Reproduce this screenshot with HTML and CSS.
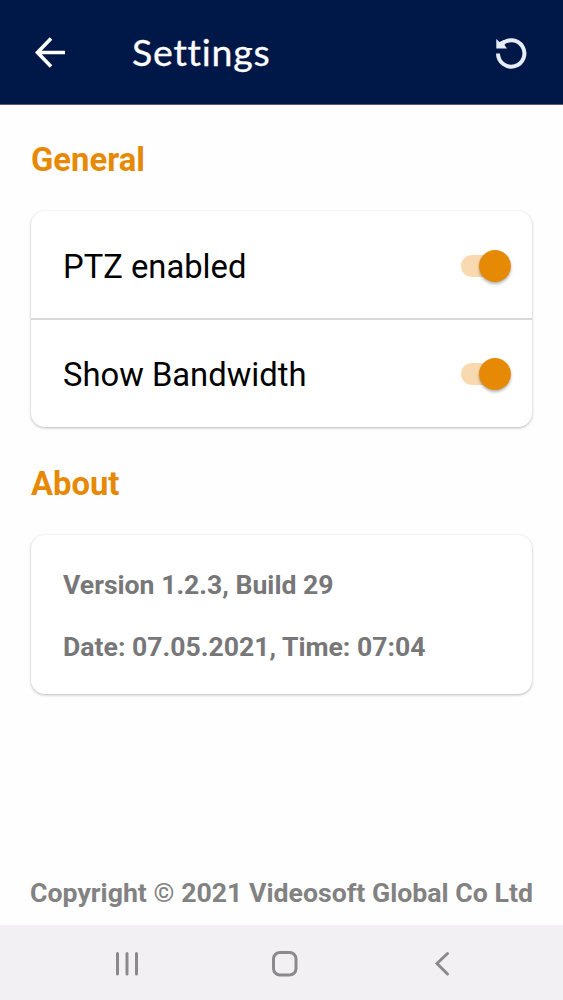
FILE: index.html
```
<!DOCTYPE html>
<html lang="en">
<head>
	<meta charset="utf-8">
	<title>Settings</title>
	<link rel="stylesheet" href="styles.css">
</head>
<body>
	<header class="app-bar">
		<svg class="back" viewBox="0 0 34 34"><path d="M32 17.500H4.500M18 3.500L4.500 17.500L18 31.500"/></svg>
		<h1>Settings</h1>
		<svg class="reset" viewBox="0 0 34 34"><path d="M7.500 9.500A13.200 13.200 0 1 1 4 18.500"/><path class="head" d="M2.300 4L5.500 7L10 5L10.500 10L13 13.500H2.300Z"/></svg>
	</header>
	<main>
		<h2>General</h2>
		<section class="card">
			<div class="row"><span>PTZ enabled</span><span class="switch"></span></div>
			<div class="row"><span>Show Bandwidth</span><span class="switch"></span></div>
		</section>
		<h2 class="about-title">About</h2>
		<section class="card about">
			<p>Version 1.2.3, Build 29</p>
			<p>Date: 07.05.2021, Time: 07:04</p>
		</section>
	</main>
	<footer>Copyright © 2021 Videosoft Global Co Ltd</footer>
	<nav class="nav-bar">
		<svg viewBox="0 0 28 28"><path d="M5.500 4.500V25M15 4.500V25M24.500 4.500V25"/></svg>
		<svg viewBox="0 0 28 28"><rect x="3.500" y="3.500" width="22.500" height="22.500" rx="6.500"/></svg>
		<svg viewBox="0 0 28 28"><path d="M19.500 4.500L9 14.500L19.500 25"/></svg>
	</nav>
</body>
</html>
```
FILE: styles.css
```
* {
	box-sizing: border-box;
}
body {
	display: flex;
	flex-direction: column;
	height: 1000px;
	margin: 0;
	background: #fefefe;
	font-family: Roboto, sans-serif;
}
h1, h2, p {
	margin: 0;
}
.app-bar {
	display: flex;
	align-items: center;
	height: 105px;
	padding: 0 35px 0 33px;
	border-bottom: 1px solid #5a5872;
	background: #001847;
	color: #fff;
}
.app-bar h1 {
	flex: 1;
	margin: 0 0 0 65px;
	font: 400 37.500px/50px Lato, sans-serif;
	font-variant-ligatures: none;
	letter-spacing: .75px;
	-webkit-text-stroke: .3px #fff;
}
.app-bar svg {
	width: 34px;
	height: 34px;
	fill: none;
	stroke: #fff;
	stroke-width: 3.6;
}
.app-bar .reset {
	stroke: #e6edf8;
	stroke-width: 4;
}
.app-bar .head {
	fill: #e6edf8;
	stroke: none;
}
main {
	flex: 1;
	padding: 35px 31px 0;
}
h2 {
	color: #e68a06;
	font-size: 32.8px;
	line-height: 40px;
}
.card {
	margin-top: 31px;
	border-radius: 14px;
	background: #fff;
	box-shadow: 0 1px 3px rgba(0, 0, 0, .28);
}
.row {
	display: flex;
	align-items: center;
	justify-content: space-between;
	height: 109px;
	padding: 0 21px 0 32px;
	border-top: 2px solid #d8d8d8;
	font-size: 32.75px;
	line-height: 40px;
}
.row:first-child {
	height: 107px;
	padding-top: 2px;
	border-top: 0;
}
.row span:first-child {
	padding-top: 2px;
}
.switch {
	position: relative;
	display: flex;
	align-items: center;
	justify-content: flex-end;
	width: 50px;
	height: 32px;
}
.switch::before {
	content: "";
	position: absolute;
	left: 0;
	width: 40px;
	height: 22px;
	border-radius: 11px;
	background: #f9dab0;
}
.switch::after {
	content: "";
	z-index: 1;
	width: 32px;
	height: 32px;
	border-radius: 50%;
	background: #e68a06;
	box-shadow: 0 2px 3px rgba(0, 0, 0, .3);
}
.about-title {
	margin-top: 37px;
}
.about {
	height: 159px;
	padding: 30px 32px;
	color: #77777a;
	font-size: 26.6px;
	font-weight: 700;
	line-height: 40px;
}
.about p + p {
	margin-top: 22px;
}
footer {
	height: 50px;
	color: #828282;
	font-size: 26.7px;
	font-weight: 700;
	line-height: 36px;
	text-align: center;
	white-space: nowrap;
}
.nav-bar {
	display: flex;
	justify-content: space-between;
	height: 75px;
	padding: 24px 107px 0 112px;
	background: #f2f0f3;
}
.nav-bar svg {
	width: 28px;
	height: 28px;
	fill: none;
	stroke: #8b898e;
	stroke-width: 3;
	stroke-linecap: round;
}
```
